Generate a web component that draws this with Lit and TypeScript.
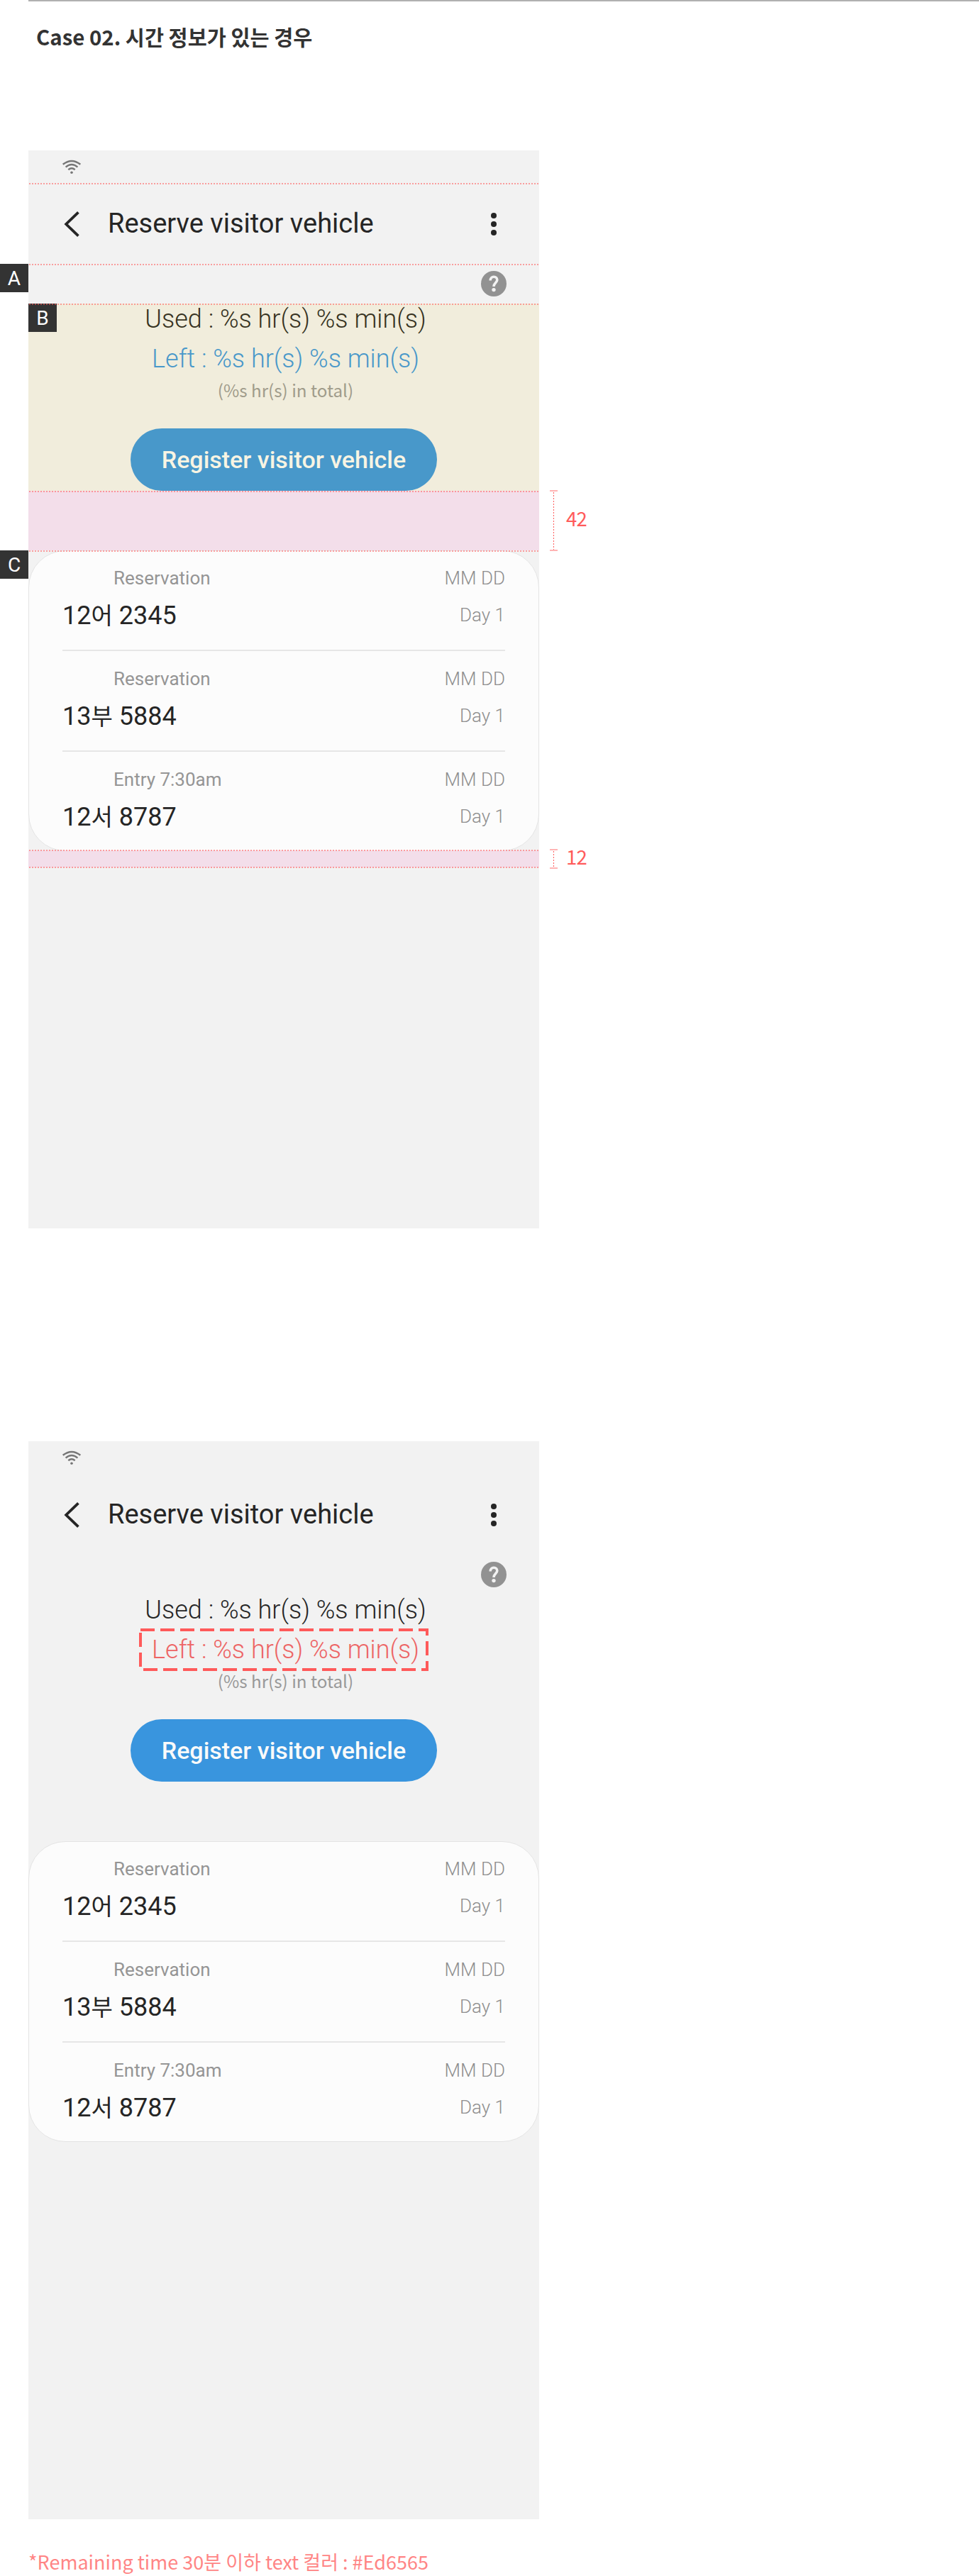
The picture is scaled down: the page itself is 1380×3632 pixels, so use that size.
import { LitElement, html, css, svg, nothing } from "lit";
import { customElement, property } from "lit/decorators.js";

interface Visit {
  status: string;
  plate: [string, string, string];
}

const VISITS: Visit[] = [
  { status: "Reservation", plate: ["12", "어", " 2345"] },
  { status: "Reservation", plate: ["13", "부", " 5884"] },
  { status: "Entry 7:30am", plate: ["12", "서", " 8787"] },
];

// Heights, from the top of the phone frame, of the dotted guide lines.
const GUIDES = [46, 160, 216, 480, 564, 986, 1010];

@customElement("phone-screen")
export class PhoneScreen extends LitElement {
  @property({ type: Boolean }) low = false;
  @property({ type: Boolean }) annotated = false;

  static styles = css`
    :host {
      display: flex;
      flex-direction: column;
      position: relative;
      width: 720px;
      height: 1520px;
      background: #f2f2f2;
      font-family: Roboto, "Noto Sans CJK KR", sans-serif;
      color: #252525;
    }
    .status-bar {
      height: 46px;
      box-sizing: border-box;
      padding: 13px 0 0 47px;
    }
    svg { display: block; }
    .header {
      display: flex;
      align-items: center;
      height: 114px;
      padding: 0 60px 0 50px;
    }
    .header svg { margin-top: 2px; }
    .title {
      flex: 1;
      margin: 0 0 0 38px;
      font-weight: 400;
      font-size: 38px;
      line-height: 46px;
      white-space: nowrap;
    }
    .help {
      display: flex;
      align-items: center;
      justify-content: flex-end;
      height: 56px;
      padding-right: 46px;
    }
    .summary {
      display: flex;
      flex-direction: column;
      align-items: center;
      height: 264px;
      white-space: pre;
    }
    .used, .left {
      font-size: 36px;
      font-weight: 350;
      line-height: 44px;
      padding-left: 5px;
    }
    .left { margin-top: 12px; color: #3995de; }
    .left.low { color: #ed6565; }
    .total {
      margin-top: 2px;
      padding-left: 5px;
      font-family: "Noto Sans CJK KR", sans-serif;
      font-size: 24.2px;
      font-weight: 400;
      line-height: 40px;
      color: #999;
    }
    .register {
      display: flex;
      align-items: center;
      justify-content: center;
      width: 432px;
      height: 88px;
      margin-top: 34px;
      border: 0;
      padding: 0;
      border-radius: 44px;
      background: #3995de;
      color: #fafafa;
      font: 500 34px/42px Roboto, sans-serif;
    }
    .card {
      box-sizing: border-box;
      height: 424px;
      margin-top: 84px;
      padding: 0 47px;
      border: 1px solid #e4e4e4;
      border-radius: 52px;
      background: #fcfcfc;
    }
    .row {
      display: flex;
      justify-content: space-between;
      box-sizing: border-box;
      height: 142px;
      padding-top: 23px;
      border-bottom: 2px solid #e6e6e6;
      white-space: pre;
    }
    .row:first-child { height: 141px; padding-top: 22px; }
    .row:last-child { border-bottom: 0; }
    .info { display: flex; flex-direction: column; gap: 15px; }
    .state {
      padding-left: 72px;
      font-size: 26px;
      font-weight: 400;
      line-height: 32px;
      color: #959595;
    }
    .plate { font-size: 36px; line-height: 44px; }
    .syllable { font-size: 33px; line-height: 0; }
    .when {
      display: flex;
      flex-direction: column;
      align-items: flex-end;
      gap: 20px;
      font-size: 26px;
      font-weight: 300;
      line-height: 32px;
      color: #8e8e8e;
    }
    .tint {
      position: absolute;
      left: 0;
      top: 216px;
      width: 720px;
      height: 264px;
      background: rgba(231, 187, 0, 0.09);
    }
    .space {
      position: absolute;
      left: 0;
      width: 720px;
      background: #f3deea;
    }
    .space.upper { top: 480px; height: 84px; }
    .space.lower { top: 987px; height: 24px; }
    .marker {
      position: absolute;
      width: 40px;
      height: 40px;
      background: #333;
      color: #fff;
      font-size: 28px;
      line-height: 41px;
      text-align: center;
    }
    .marker.a { left: -40px; top: 160px; }
    .marker.b { left: 0; top: 216px; }
    .marker.c { left: -40px; top: 564px; }
    .guides { position: absolute; left: 0; top: 0; }
    .measure {
      position: absolute;
      left: 735px;
      display: flex;
      align-items: center;
      gap: 12px;
      font-family: "Noto Sans CJK KR", sans-serif;
      font-size: 27.5px;
      font-weight: 400;
      line-height: 28px;
      color: #ff5a5a;
    }
    .measure span { margin-top: -8px; letter-spacing: -0.8px; }
    .measure.m42 { top: 479px; }
    .measure.m12 { top: 985px; }
    .focus { position: absolute; left: 156px; top: 264px; }
  `;

  private annotations() {
    return html`
      <div class="tint"></div>
      <div class="space upper"></div>
      <div class="space lower"></div>
      <div class="marker a">A</div>
      <div class="marker b">B</div>
      <div class="marker c">C</div>
      <svg class="guides" width="720" height="1520">
        ${GUIDES.map(
          (y) => svg`<line x1="1" x2="719" y1=${y + 1} y2=${y + 1}
            stroke="#ff5a5a" stroke-opacity="0.55" stroke-width="2" stroke-dasharray="2 2"/>`
        )}
      </svg>
      ${this.measure("m42", 86, "42")} ${this.measure("m12", 28, "12")}
    `;
  }

  private measure(name: string, h: number, label: string) {
    return html`<div class="measure ${name}">
      <svg width="11" height=${h}>
        <path d="M0 1H11M0 ${h - 1}H11" stroke="#ffb4b4" stroke-width="2" />
        <path d="M5.5 3V${h - 2}" stroke="#ff5a5a" stroke-dasharray="2 2" />
      </svg>
      <span>${label}</span>
    </div>`;
  }

  render() {
    return html`
      <div class="status-bar">
        <svg width="28" height="20" viewBox="0 0 28 20" fill="none" stroke="#777" stroke-width="2.4">
          <path d="M1.7 6.8Q14 -3 26.3 6.8M5.6 10.6Q14 3.6 22.4 10.6M9.3 14.2Q14 10.4 18.7 14.2" />
          <circle cx="14" cy="18.2" r="1.8" fill="#777" stroke="none" />
        </svg>
      </div>
      <div class="header">
        <svg width="24" height="36" viewBox="0 0 24 36" fill="none" stroke="#252525" stroke-width="3.8">
          <path d="M20.4 1.4L3.2 18L20.4 34.6" />
        </svg>
        <h1 class="title">Reserve visitor vehicle</h1>
        <svg width="8" height="32" viewBox="0 0 8 32" fill="#252525">
          <circle cx="4" cy="4" r="4" /><circle cx="4" cy="16" r="4" /><circle cx="4" cy="28" r="4" />
        </svg>
      </div>
      <div class="help">
        <svg width="36" height="36" viewBox="0 0 36 36">
          <circle cx="18" cy="18" r="18" fill="#929292" />
          <path d="M13.2 13.6C13.2 10.6 15.3 8.2 18.1 8.2C20.8 8.2 22.8 10.2 22.8 12.8C22.8 16.2 18 17 18 22"
            fill="none" stroke="#f2f2f2" stroke-width="3.6" />
          <circle cx="18" cy="26.6" r="2.7" fill="#f2f2f2" />
        </svg>
      </div>
      <div class="summary">
        <div class="used">Used : %s hr(s) %s min(s)</div>
        <div class="left ${this.low ? "low" : ""}">Left : %s hr(s) %s min(s)</div>
        <div class="total">(%s hr(s) in total)</div>
        <button class="register">Register visitor vehicle</button>
      </div>
      <div class="card">
        ${VISITS.map(
          (v) => html`<div class="row"><div class="info"><div class="state">${v.status}</div><div class="plate">${v.plate[0]}<span class="syllable">${v.plate[1]}</span>${v.plate[2]}</div></div><div class="when"><div>MM DD</div><div>Day 1</div></div></div>`
        )}
      </div>
      ${this.annotated ? this.annotations() : nothing}
      ${this.low
        ? html`<svg class="focus" width="408" height="60">
            <rect x="2" y="2" width="404" height="56" fill="none" stroke="#ff5a5a"
              stroke-width="4" stroke-dasharray="20 8" />
          </svg>`
        : nothing}
    `;
  }
}

@customElement("app-root")
export class AppRoot extends LitElement {
  static styles = css`
    :host {
      display: block;
      box-sizing: border-box;
      width: 1380px;
      height: 3632px;
      padding-left: 40px;
      overflow: hidden;
      background: #fff;
      font-family: "Noto Sans CJK KR", sans-serif;
    }
    .case {
      box-sizing: border-box;
      height: 212px;
      margin: 0;
      padding: 29px 0 0 11px;
      border-top: 2px solid #b0b0b0;
      color: #333;
      font-size: 29.4px;
      font-weight: 700;
      line-height: 40px;
    }
    .second { margin-top: 300px; }
    .note {
      margin: 41px 0 0;
      color: #ff8585;
      font-size: 27px;
      line-height: 38px;
      font-weight: 400;
    }
  `;

  render() {
    return html`
      <h2 class="case">Case 02. 시간 정보가 있는 경우</h2>
      <phone-screen annotated></phone-screen>
      <phone-screen class="second" low></phone-screen>
      <p class="note">*Remaining time 30분 이하 text 컬러 : #Ed6565</p>
    `;
  }
}
